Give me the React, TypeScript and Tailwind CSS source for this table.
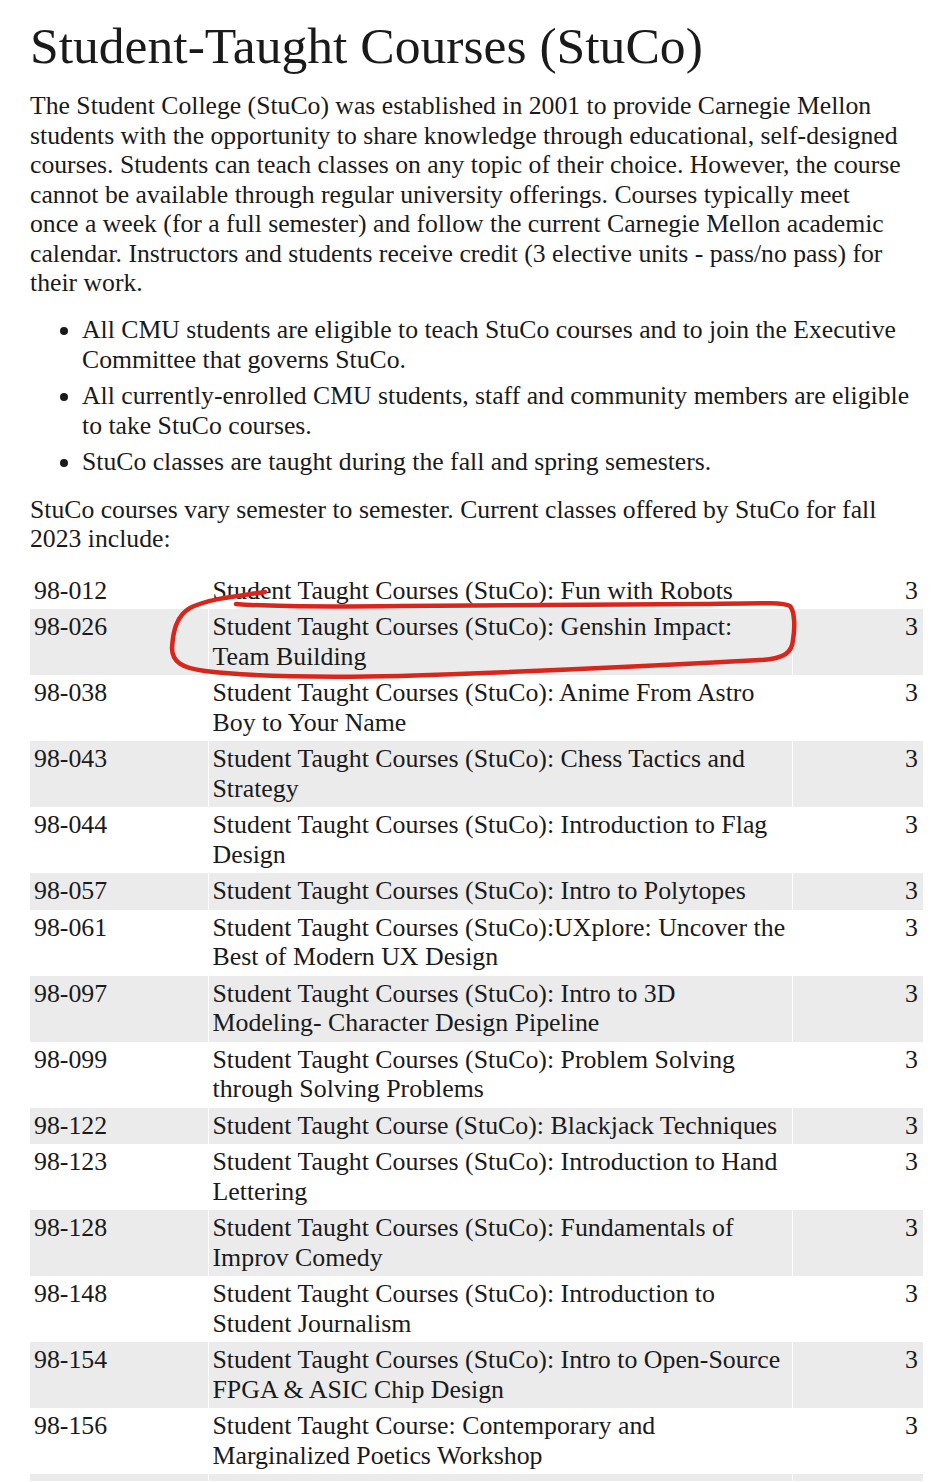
import React from 'react';

type Course = { code: string; title: string; units: string };

const courses: Course[] = [
  { code: '98-012', title: 'Student Taught Courses (StuCo): Fun with Robots', units: '3' },
  { code: '98-026', title: 'Student Taught Courses (StuCo): Genshin Impact: Team Building', units: '3' },
  { code: '98-038', title: 'Student Taught Courses (StuCo): Anime From Astro Boy to Your Name', units: '3' },
  { code: '98-043', title: 'Student Taught Courses (StuCo): Chess Tactics and Strategy', units: '3' },
  { code: '98-044', title: 'Student Taught Courses (StuCo): Introduction to Flag Design', units: '3' },
  { code: '98-057', title: 'Student Taught Courses (StuCo): Intro to Polytopes', units: '3' },
  { code: '98-061', title: 'Student Taught Courses (StuCo):UXplore: Uncover the Best of Modern UX Design', units: '3' },
  { code: '98-097', title: 'Student Taught Courses (StuCo): Intro to 3D Modeling- Character Design Pipeline', units: '3' },
  { code: '98-099', title: 'Student Taught Courses (StuCo): Problem Solving through Solving Problems', units: '3' },
  { code: '98-122', title: 'Student Taught Course (StuCo): Blackjack Techniques', units: '3' },
  { code: '98-123', title: 'Student Taught Courses (StuCo): Introduction to Hand Lettering', units: '3' },
  { code: '98-128', title: 'Student Taught Courses (StuCo): Fundamentals of Improv Comedy', units: '3' },
  { code: '98-148', title: 'Student Taught Courses (StuCo): Introduction to Student Journalism', units: '3' },
  { code: '98-154', title: 'Student Taught Courses (StuCo): Intro to Open-Source FPGA & ASIC Chip Design', units: '3' },
  { code: '98-156', title: 'Student Taught Course: Contemporary and Marginalized Poetics Workshop', units: '3' },
  // next row only peeks in at the bottom edge
  { code: '', title: '', units: '' },
];

// hand-drawn red circle around the Genshin row
function Scribble() {
  return (
    <svg
      className="pointer-events-none absolute left-0 top-0"
      width="937"
      height="700"
      viewBox="0 0 937 700"
      fill="none"
    >
      <path
        d="M265 592 C240 596 210 598 190 608 C176 616 173 632 172 648 C172 662 182 668 205 671 C245 676 300 678 400 676 C520 672 650 666 760 660 C785 659 792 652 793 640 C795 628 795 612 790 606 C784 602 760 603 700 604 L400 606 C320 607 260 606 236 604"
        stroke="#d8261b"
        strokeWidth="4.5"
        strokeLinecap="round"
        strokeLinejoin="round"
      />
    </svg>
  );
}

export default function App() {
  return (
    <div className="relative h-[1482px] overflow-hidden bg-white pl-[30px] pr-[14px] pt-[16px] text-[#1a1a1a] [font-family:'Liberation_Serif','Times_New_Roman',serif]">
      <h1 className="text-[51.6px] leading-[60px]">Student-Taught Courses (StuCo)</h1>

      <p className="mt-[15px] pr-[21px] text-[25.7px] leading-[29.5px]">
        The Student College (StuCo) was established in 2001 to provide Carnegie Mellon students with the
        opportunity to share knowledge through educational, self-designed courses. Students can teach classes on
        any topic of their choice. However, the course cannot be available through regular university offerings.
        Courses typically meet once a week (for a full semester) and follow the current Carnegie Mellon academic
        calendar. Instructors and students receive credit (3 elective units - pass/no pass) for their work.
      </p>

      <ul className="mt-[17.5px] flex flex-col gap-[7px] pl-[52px] text-[25.7px] leading-[29.5px]">
        <li className="list-disc">
          All CMU students are eligible to teach StuCo courses and to join the Executive Committee that governs StuCo.
        </li>
        <li className="list-disc">
          All currently-enrolled CMU students, staff and community members are eligible to take StuCo courses.
        </li>
        <li className="list-disc">StuCo classes are taught during the fall and spring semesters.</li>
      </ul>

      <p className="mt-[18px] pr-[21px] text-[25.7px] leading-[29.5px]">
        StuCo courses vary semester to semester. Current classes offered by StuCo for fall 2023 include:
      </p>

      <table className="mt-[19px] w-[893px] border-collapse text-[25.85px] leading-[29.5px]">
        <tbody>
          {courses.map((c, i) => (
            <tr key={i} className={i % 2 === 1 ? 'bg-[#ebebeb]' : 'bg-white'}>
              <td className="w-[178px] px-[4px] pb-[4px] pt-[3px] align-top">{c.code}</td>
              <td className="w-[584px] border-x border-white px-[4px] pb-[4px] pt-[3px] align-top">{c.title}</td>
              <td className="px-[5px] pb-[4px] pt-[3px] text-right align-top">{c.units}</td>
            </tr>
          ))}
        </tbody>
      </table>

      <Scribble />
    </div>
  );
}
